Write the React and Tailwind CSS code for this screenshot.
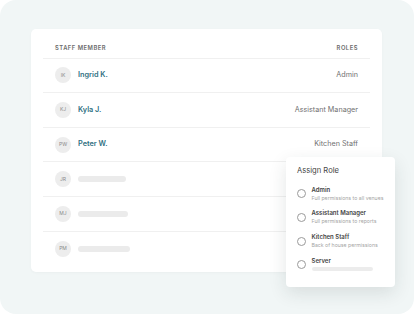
import { useState } from 'react';

// --- 데이터 ---
const staff = [
  { initials: 'IK', name: 'Ingrid K.', role: 'Admin' },
  { initials: 'KJ', name: 'Kyla J.', role: 'Assistant Manager' },
  { initials: 'PW', name: 'Peter W.', role: 'Kitchen Staff' },
  { initials: 'JR', bar: 'w-[48px]' },
  { initials: 'MJ', bar: 'w-[50px]' },
  { initials: 'PM', bar: 'w-[52px]' },
];

const roles = [
  { title: 'Admin', desc: 'Full permissions to all venues' },
  { title: 'Assistant Manager', desc: 'Full permissions to reports' },
  { title: 'Kitchen Staff', desc: 'Back of house permissions' },
  { title: 'Server', desc: null },
];

export default function App() {
  const [selected, setSelected] = useState(null);

  return (
    <div className="w-[414px] h-[314px] bg-white font-['Inter','Liberation_Sans',sans-serif]">
      <div className="relative w-full h-full bg-[#f1f6f6] rounded-[16px] pt-[29px] pl-[31px]">
        {/* 카드 */}
        <div className="w-[351px] h-[243px] bg-white rounded-[5px] shadow-[0_1px_3px_rgba(0,0,0,0.03)] px-[12px]">
          <div className="h-[29.7px] flex items-end justify-between pl-[12px] pr-[12px] pb-[5px] border-b border-[#f0f0f0] text-[5.8px] font-semibold tracking-[0.09em] text-[#6b6b6b]">
            <span>STAFF MEMBER</span>
            <span>ROLES</span>
          </div>
          {staff.map((s, i) => (
            <div
              key={s.initials}
              className={`h-[34.6px] flex items-center justify-between pl-[12px] pr-[12px] ${i < staff.length - 1 ? 'border-b border-[#f0f0f0]' : ''}`}
            >
              <div className="flex items-center gap-[7px]">
                <div className="w-[16px] h-[16px] rounded-full bg-[#ededed] flex items-center justify-center text-[5px] text-[#8a8a8a]">
                  {s.initials}
                </div>
                {s.name ? (
                  <span className="text-[7.3px] font-semibold text-[#2f7082]">{s.name}</span>
                ) : (
                  <div className={`${s.bar} h-[6px] rounded-full bg-[#ebebeb]`} />
                )}
              </div>
              {s.role && <span className="text-[7.2px] text-[#707070]">{s.role}</span>}
            </div>
          ))}
        </div>

        {/* 역할 지정 팝업 */}
        <div className="absolute left-[286px] top-[157px] w-[109px] h-[130px] bg-white rounded-[4px] shadow-[0_6px_18px_rgba(30,50,50,0.12)] pl-[11px] pt-[10px]">
          <div className="text-[7.6px] text-[#444] leading-none">Assign Role</div>
          <div className="mt-[12px] flex flex-col gap-[9.5px]">
            {roles.map((r) => (
              <button
                key={r.title}
                onClick={() => setSelected(r.title)}
                className="flex items-center gap-[5.5px] text-left"
              >
                <span
                  className={`w-[9px] h-[9px] rounded-full border ${selected === r.title ? 'border-[#2f7082] bg-[#2f7082]' : 'border-[#9a9a9a]'} shrink-0`}
                />
                <span className="flex flex-col gap-[3px]">
                  <span className="text-[6px] font-semibold text-[#444] leading-none">{r.title}</span>
                  {r.desc ? (
                    <span className="text-[5.2px] text-[#a5a5a5] leading-none">{r.desc}</span>
                  ) : (
                    <span className="block w-[61px] h-[4px] rounded-full bg-[#ececec]" />
                  )}
                </span>
              </button>
            ))}
          </div>
        </div>
      </div>
    </div>
  );
}
